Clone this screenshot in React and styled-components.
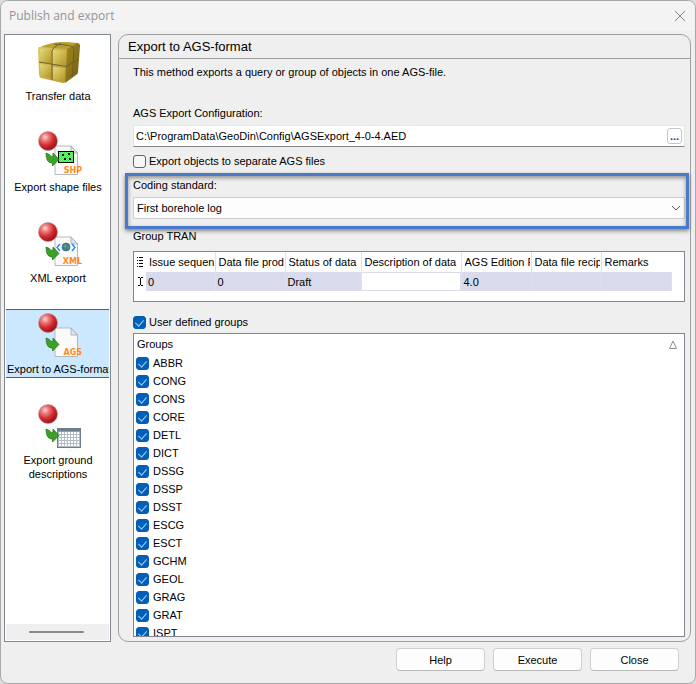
import React, { useState } from 'react'
import styled, { createGlobalStyle, ThemeProvider } from 'styled-components'

const theme = {
  colors: {
    face: '#efefef',
    titleBar: '#f3f3f3',
    line: '#a0a0a0',
    frame: '#828790',
    accent: '#005fb8',
    selected: '#cce8ff',
    selectedLine: '#0078d7',
    row: '#d9dbec',
    callout: '#4a7bcb',
  },
}

const GlobalStyle = createGlobalStyle`
  * {
    box-sizing: border-box;
  }

  body {
    margin: 0;
    background: #dcdcdc;
    color: #000;
    font: 11px/14px 'Liberation Sans', Arial, sans-serif;
  }

  button,
  input,
  select {
    font: inherit;
    color: inherit;
  }
`

const Dialog = styled.div`
  display: flex;
  flex-direction: column;
  height: 100vh;
  overflow: hidden;
  border: 1px solid #a9a9a9;
  border-radius: 8px;
  background: ${({ theme }) => theme.colors.face};
`

const TitleBar = styled.header`
  display: flex;
  flex: none;
  align-items: center;
  justify-content: space-between;
  height: 30px;
  padding: 0 7px 0 8px;
  background: ${({ theme }) => theme.colors.titleBar};
`

const DialogTitle = styled.h1`
  margin: 0;
  color: #949494;
  font: 12px/16px 'Open Sans', 'Noto Sans', sans-serif;
`

const CloseIcon = styled.button`
  display: flex;
  padding: 2px;
  border: 0;
  background: none;
  color: #858585;
`

const Body = styled.div`
  display: flex;
  flex: 1;
  min-height: 0;
  gap: 7px;
  padding: 3px 4px 0 3px;
`

const Sidebar = styled.nav`
  display: flex;
  flex: none;
  flex-direction: column;
  width: 107px;
  padding: 1px;
  border: 1px solid ${({ theme }) => theme.colors.frame};
  background: #fff;
`

const NavList = styled.div`
  display: flex;
  flex: 1;
  flex-direction: column;
  gap: 22px;
  min-height: 0;
  overflow: hidden;
`

const NavItem = styled.button`
  display: flex;
  flex: none;
  flex-direction: column;
  align-items: center;
  gap: 1px;
  padding: 3px 0 1px;
  overflow: hidden;
  border: solid
    ${({ $active, theme }) =>
      $active ? theme.colors.selectedLine : 'transparent'};
  border-width: 1px 0;
  background: ${({ $active, theme }) =>
    $active ? theme.colors.selected : 'none'};
`

const NavLabel = styled.span`
  align-self: stretch;
  padding-left: 1px;
  text-align: center;
  white-space: pre;
`

const SideScroll = styled.div`
  display: flex;
  flex: none;
  align-items: center;
  justify-content: center;
  height: 16px;
  padding-right: 2px;
  background: ${({ theme }) => theme.colors.face};
`

const SideThumb = styled.div`
  width: 55px;
  height: 2px;
  border-radius: 1px;
  background: #868a87;
`

const Panel = styled.main`
  display: flex;
  flex: 1;
  flex-direction: column;
  min-width: 0;
  border: 1px solid ${({ theme }) => theme.colors.line};
  border-radius: 10px;
`

const PanelTitle = styled.h2`
  flex: none;
  height: 24px;
  margin: 0;
  padding: 0 9px;
  border-bottom: 1px solid ${({ theme }) => theme.colors.line};
  font-size: 13px;
  font-weight: normal;
  line-height: 24px;
`

const Form = styled.div`
  display: flex;
  flex: 1;
  flex-direction: column;
  min-height: 0;
  padding: 6px 5px 4px 14px;
`

const Intro = styled.p`
  margin: 0 0 27px;
`

const Field = styled.div`
  display: flex;
  flex: none;
  flex-direction: column;
  gap: 5px;
`

const PathField = styled(Field)`
  margin-bottom: 5px;
`

const PathBox = styled.div`
  display: flex;
  align-items: center;
  height: 22px;
  padding-right: 2px;
  border: 1px solid #e6e6e6;
  border-bottom-color: #858585;
  background: #fff;
`

const PathInput = styled.input`
  flex: 1;
  min-width: 0;
  padding: 0 2px;
  border: 0;
  background: none;
  outline: none;
`

const BrowseButton = styled.button`
  width: 15px;
  height: 16px;
  padding: 0;
  border: 1px solid #c6c6c6;
  border-radius: 3px;
  background: #fdfdfd;
  color: #1f4470;
  font-weight: bold;
  line-height: 12px;
`

const CheckLabel = styled.label`
  display: flex;
  flex: none;
  align-items: center;
  gap: ${({ $gap }) => $gap || 3}px;
  height: 18px;
`

const CheckBox = styled.input.attrs({ type: 'checkbox' })`
  display: flex;
  flex: none;
  justify-content: center;
  width: 13px;
  height: 13px;
  margin: 0;
  appearance: none;
  border: 1px solid #626262;
  border-radius: 3px;
  background: #f6f6f6;

  &:checked {
    border-color: ${({ theme }) => theme.colors.accent};
    background: ${({ theme }) => theme.colors.accent};
  }

  &:checked::after {
    content: '';
    width: 4px;
    height: 7px;
    margin-top: 1px;
    border: solid #a9cdee;
    border-width: 0 1px 1px 0;
    transform: rotate(42deg);
  }
`

const CalloutField = styled(Field)`
  position: relative;
  margin: 8px 0 10px;

  &::after {
    content: '';
    position: absolute;
    inset: -5px -4px -10px -8px;
    border: 3px solid ${({ theme }) => theme.colors.callout};
    box-shadow: 0 2px 4px rgba(0, 0, 0, 0.45),
      inset 0 2px 4px rgba(0, 0, 0, 0.4);
    pointer-events: none;
  }
`

const SelectBox = styled.div`
  display: flex;
  align-items: center;
  height: 22px;
  padding-right: 3px;
  border: 1px solid #cdcdcd;
  border-radius: 1px;
  background: #fdfdfd;
`

const Select = styled.select`
  flex: 1;
  min-width: 0;
  padding: 0 3px;
  appearance: none;
  border: 0;
  background: none;
  outline: none;
`

const GridBox = styled.div`
  flex: none;
  height: 51px;
  margin: 8px 0 11px;
  overflow: hidden;
  border: 1px solid ${({ theme }) => theme.colors.frame};
  background: #fff;
`

const Grid = styled.table`
  width: 537px;
  table-layout: fixed;
  border-collapse: collapse;
`

const HeadCell = styled.th`
  height: 20px;
  padding: 0 1px 0 3px;
  overflow: hidden;
  border-right: 1px solid #e2e2e6;
  font-weight: normal;
  text-align: left;
  white-space: nowrap;

  &:last-child {
    border-right-color: #fff;
  }
`

const Clip = styled.div`
  overflow: hidden;
`

const Cell = styled.td`
  height: 19px;
  padding: 0 2px;
  border-right: 1px solid #e2e2e6;
  background: ${({ theme }) => theme.colors.row};
`

const MarkCell = styled.td`
  padding: 0;
  text-align: center;

  svg {
    display: block;
    margin: auto;
  }
`

const CellInput = styled.input`
  display: block;
  width: 100%;
  height: 17px;
  padding: 0;
  border: 0;
  background: #fff;
  outline: none;
`

const EditCell = styled(Cell)`
  padding: 0 1px 0 0;
`

const GroupBox = styled.div`
  display: flex;
  flex: 1;
  flex-direction: column;
  min-height: 0;
  margin-top: 2px;
  overflow: hidden;
  border: 1px solid ${({ theme }) => theme.colors.frame};
  background: #fff;
`

const GroupHead = styled.div`
  display: flex;
  flex: none;
  align-items: center;
  justify-content: space-between;
  height: 20px;
  padding: 0 7px 0 3px;
`

const GroupRows = styled.div`
  flex: 1;
  min-height: 0;
  padding-left: 2px;
  overflow: hidden;
`

const Footer = styled.footer`
  display: flex;
  flex: none;
  justify-content: flex-end;
  gap: 8px;
  padding: 6px 16px 12px;
`

const PushButton = styled.button`
  width: 89px;
  height: 23px;
  padding: 0;
  border: 1px solid #cfcfcf;
  border-bottom-color: #b9b9b9;
  border-radius: 4px;
  background: #fdfdfd;
`

const BoxIcon = () => (
  <svg width="48" height="48" viewBox="0 0 48 48" aria-hidden="true">
    <defs>
      <linearGradient id="boxFront" x1="0" y1="0" x2="1" y2="1">
        <stop offset="0" stopColor="#dccd66" />
        <stop offset="1" stopColor="#b3972a" />
      </linearGradient>
      <linearGradient id="boxSide" x1="0" y1="0" x2="1" y2="1">
        <stop offset="0" stopColor="#a58c22" />
        <stop offset="1" stopColor="#6f5a0c" />
      </linearGradient>
      <linearGradient id="boxCell" x1="0" y1="0" x2="1" y2="1">
        <stop offset="0" stopColor="#e4d883" />
        <stop offset="0.5" stopColor="#cdb84c" />
        <stop offset="1" stopColor="#ae932a" />
      </linearGradient>
    </defs>
    <path d="M4 8Q12 4 19 3Q28 1 44 3L33 10Z" fill="#b9a030" />
    <path d="M4 10Q4 7 7 7L31 9Q34 9 34 12L32 41Q31 43 29 43L7 38Q5 37 5 34Z" fill="url(#boxFront)" />
    <path d="M33 9 43 3Q46 3 46 6L44 32Q44 34 42 35L31 43Z" fill="url(#boxSide)" />
    <path d="M6 9 17 10V24L6 21Z" fill="url(#boxCell)" />
    <path d="M19 10 32 11 31 26 19 24Z" fill="url(#boxCell)" />
    <path d="M6 24 17 26V38L7 36Z" fill="url(#boxCell)" />
    <path d="M19 27 31 28 30 41 19 39Z" fill="url(#boxCell)" />
    <path d="M18 40V11Q18 8 27 3M5 22 32 26.500 45 19M38.500 37 40 8Q39 5 20 4" fill="none" stroke="#6b5f2c" />
  </svg>
)

const Ball = () => (
  <>
    <defs>
      <radialGradient id="ball" cx="0.35" cy="0.3" r="0.75">
        <stop offset="0" stopColor="#ffd9d9" />
        <stop offset="0.25" stopColor="#f07c7c" />
        <stop offset="0.6" stopColor="#d02a2e" />
        <stop offset="1" stopColor="#8e1014" />
      </radialGradient>
    </defs>
    <circle cx="14" cy="10" r="9.5" fill="url(#ball)" stroke="#b89090" strokeWidth="0.6" />
  </>
)

const Arrow = ({ y = 0 }) => (
  <path
    transform={`translate(0 ${y})`}
    d="M12 25 15.500 26.500Q15.500 28.500 19 28.500V25L25 31.500 18.500 38V35Q12 35.500 12 25Z"
    fill="#3da028"
    stroke="#26771a"
    strokeWidth="0.8"
  />
)

const Sheet = ({ tag }) => (
  <>
    <path d="M21 15H37L43.500 22V43.500H21Z" fill="#fafafa" stroke="#b5b9be" />
    <path d="M37 15V22H43.500Z" fill="#dfe4ea" stroke="#a0a6ad" strokeWidth="0.8" />
    <text x="48" y="42" textAnchor="end" fill="#ff8a1c" fontFamily="DejaVu Sans, sans-serif" fontSize="8" fontWeight="bold">
      {tag}
    </text>
  </>
)

const ShapeIcon = () => (
  <svg width="48" height="48" viewBox="0 0 48 48" aria-hidden="true">
    <defs>
      <pattern id="dither" width="2" height="2" patternUnits="userSpaceOnUse">
        <rect width="2" height="2" fill="#3fe04c" />
        <rect width="1" height="1" fill="#a5d8a8" />
        <rect x="1" y="1" width="1" height="1" fill="#a5d8a8" />
      </pattern>
    </defs>
    <Sheet tag="SHP" />
    <rect x="24.500" y="20.500" width="15" height="11" fill="url(#dither)" stroke="#000" />
    <path d="M28 23h2v2h-2zM34 22h2v2h-2zM30 27h2v2h-2zM35 27h2v2h-2z" />
    <Ball />
    <Arrow y={-3} />
  </svg>
)

const XmlIcon = () => (
  <svg width="48" height="48" viewBox="0 0 48 48" aria-hidden="true">
    <Sheet tag="XML" />
    <circle cx="32" cy="25" r="4" fill="#3a78b8" stroke="#2c5a80" strokeWidth="0.6" />
    <path d="M29 23 32 22 33 24 31 27ZM33 26 35 24 35 27Z" fill="#5aa845" />
    <path d="M26 22 23 25.500 26 29M38 22 41 25.500 38 29" fill="none" stroke="#1a86e8" strokeWidth="1.300" />
    <Ball />
    <Arrow />
  </svg>
)

const AgsIcon = () => (
  <svg width="48" height="48" viewBox="0 0 48 48" aria-hidden="true">
    <Sheet tag="AGS" />
    <Ball />
    <Arrow />
  </svg>
)

const GroundIcon = () => (
  <svg width="48" height="48" viewBox="0 0 48 48" aria-hidden="true">
    <rect x="23.500" y="24.500" width="23" height="19" fill="#b3bdc6" stroke="#6f7e8a" />
    <path d="M23 26H47" stroke="#6f7e8a" strokeWidth="3" />
    {[28, 31, 34, 37, 40].map((y) => (
      <path key={y} d={`M25 ${y + 1}H46`} stroke="#fff" strokeWidth="2" strokeDasharray="2 1" />
    ))}
    <Ball />
    <Arrow />
  </svg>
)

const methods = [
  { label: 'Transfer data', Icon: BoxIcon },
  { label: 'Export shape files', Icon: ShapeIcon },
  { label: 'XML export', Icon: XmlIcon },
  { label: 'Export to AGS-format', Icon: AgsIcon },
  { label: 'Export ground\ndescriptions', Icon: GroundIcon },
]

const columns = [
  { title: 'Issue sequence', value: '0', width: 69 },
  { title: 'Data file producer', value: '0', width: 70 },
  { title: 'Status of data', value: 'Draft', width: 76 },
  { title: 'Description of data', value: '', width: 100, editing: true },
  { title: 'AGS Edition Ref', value: '4.0', width: 70 },
  { title: 'Data file recipient', value: '', width: 70 },
  { title: 'Remarks', value: '', width: 70 },
]

const groups = [
  'ABBR',
  'CONG',
  'CONS',
  'CORE',
  'DETL',
  'DICT',
  'DSSG',
  'DSSP',
  'DSST',
  'ESCG',
  'ESCT',
  'GCHM',
  'GEOL',
  'GRAG',
  'GRAT',
  'ISPT',
]

const TranGrid = () => (
  <GridBox>
    <Grid aria-label="Group TRAN">
      <colgroup>
        <col style={{ width: 12 }} />
        {columns.map(({ title, width }) => (
          <col key={title} style={{ width }} />
        ))}
      </colgroup>
      <thead>
        <tr>
          <MarkCell>
            <svg width="8" height="10" viewBox="0 0 8 10" aria-hidden="true">
              <path d="M1 .500h1M3 .500h4M3 3.500h4M1 3.500h1M3 6.500h4M1 6.500h1M3 9.500h4M1 9.500h1" stroke="#000" />
            </svg>
          </MarkCell>
          {columns.map(({ title }) => (
            <HeadCell key={title}>
              <Clip>{title}</Clip>
            </HeadCell>
          ))}
        </tr>
      </thead>
      <tbody>
        <tr>
          <MarkCell>
            <svg width="7" height="9" viewBox="0 0 7 9" aria-hidden="true">
              <path d="M1 .500h2M4 .500h2M3.500 1v7M1 8.500h2M4 8.500h2" stroke="#000" />
            </svg>
          </MarkCell>
          {columns.map(({ title, value, editing }) =>
            editing ? (
              <EditCell key={title}>
                <CellInput aria-label={title} defaultValue={value} />
              </EditCell>
            ) : (
              <Cell key={title}>{value}</Cell>
            )
          )}
        </tr>
      </tbody>
    </Grid>
  </GridBox>
)

export default () => {
  const [active, setActive] = useState('Export to AGS-format')

  return (
    <ThemeProvider theme={theme}>
      <GlobalStyle />
      <Dialog role="dialog" aria-labelledby="dialog-title">
        <TitleBar>
          <DialogTitle id="dialog-title">Publish and export</DialogTitle>
          <CloseIcon aria-label="Close window">
            <svg width="12" height="12" viewBox="0 0 12 12">
              <path d="M1 1 11 11M11 1 1 11" stroke="currentColor" />
            </svg>
          </CloseIcon>
        </TitleBar>
        <Body>
          <Sidebar>
            <NavList>
              {methods.map(({ label, Icon }) => (
                <NavItem
                  key={label}
                  $active={label === active}
                  onClick={() => setActive(label)}
                >
                  <Icon />
                  <NavLabel>{label}</NavLabel>
                </NavItem>
              ))}
            </NavList>
            <SideScroll>
              <SideThumb />
            </SideScroll>
          </Sidebar>
          <Panel>
            <PanelTitle>Export to AGS-format</PanelTitle>
            <Form>
              <Intro>
                This method exports a query or group of objects in one AGS-file.
              </Intro>
              <PathField>
                <label htmlFor="config">AGS Export Configuration:</label>
                <PathBox>
                  <PathInput
                    id="config"
                    defaultValue="C:\ProgramData\GeoDin\Config\AGSExport_4-0-4.AED"
                  />
                  <BrowseButton aria-label="Browse">...</BrowseButton>
                </PathBox>
              </PathField>
              <CheckLabel>
                <CheckBox />
                Export objects to separate AGS files
              </CheckLabel>
              <CalloutField>
                <label htmlFor="standard">Coding standard:</label>
                <SelectBox>
                  <Select id="standard">
                    <option>First borehole log</option>
                  </Select>
                  <svg width="10" height="6" viewBox="0 0 10 6" aria-hidden="true">
                    <path d="M1 1 5 5 9 1" fill="none" stroke="#555" />
                  </svg>
                </SelectBox>
              </CalloutField>
              <div>Group TRAN</div>
              <TranGrid />
              <CheckLabel>
                <CheckBox defaultChecked />
                User defined groups
              </CheckLabel>
              <GroupBox>
                <GroupHead>
                  Groups
                  <svg width="8" height="9" viewBox="0 0 8 9" aria-hidden="true">
                    <path d="M4 1 7.500 8.500H.500Z" fill="none" stroke="#8c8c8c" />
                  </svg>
                </GroupHead>
                <GroupRows>
                  {groups.map((group) => (
                    <CheckLabel key={group} $gap={4}>
                      <CheckBox defaultChecked />
                      {group}
                    </CheckLabel>
                  ))}
                </GroupRows>
              </GroupBox>
            </Form>
          </Panel>
        </Body>
        <Footer>
          <PushButton>Help</PushButton>
          <PushButton>Execute</PushButton>
          <PushButton>Close</PushButton>
        </Footer>
      </Dialog>
    </ThemeProvider>
  )
}
